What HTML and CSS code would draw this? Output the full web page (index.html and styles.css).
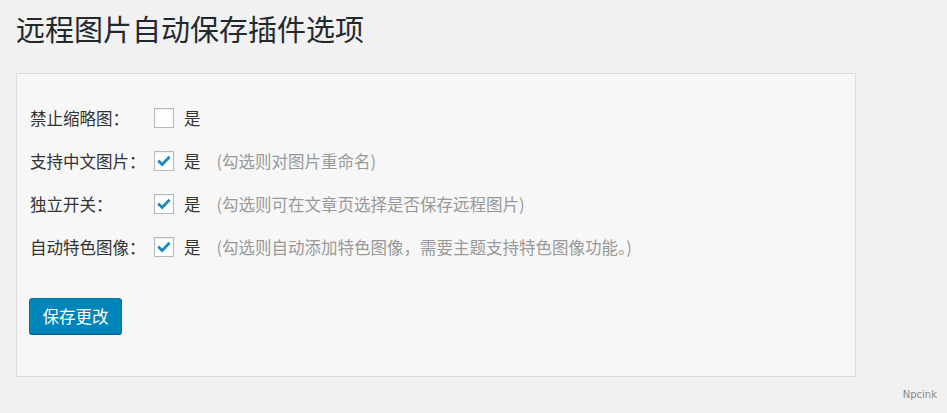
FILE: index.html
```html
<!DOCTYPE html>
<html lang="zh-CN">
<head>
<meta charset="utf-8">
<title>远程图片自动保存插件选项</title>
<link rel="stylesheet" href="styles.css">
</head>
<body>
<div class="wrap">
  <h1 class="page-title">远程图片自动保存插件选项</h1>
  <div class="panel">
    <div class="row">
      <span class="label">禁止缩略图：</span>
      <span class="checkbox"></span>
      <span class="yes">是</span>
    </div>
    <div class="row">
      <span class="label">支持中文图片：</span>
      <span class="checkbox"><svg viewBox="0 0 20 20" class="check"><path d="M3.6 9.6 L8 13.8 L16.2 5.2"/></svg></span>
      <span class="yes">是</span>
      <span class="hint">(勾选则对图片重命名)</span>
    </div>
    <div class="row">
      <span class="label">独立开关：</span>
      <span class="checkbox"><svg viewBox="0 0 20 20" class="check"><path d="M3.6 9.6 L8 13.8 L16.2 5.2"/></svg></span>
      <span class="yes">是</span>
      <span class="hint">(勾选则可在文章页选择是否保存远程图片)</span>
    </div>
    <div class="row">
      <span class="label">自动特色图像：</span>
      <span class="checkbox"><svg viewBox="0 0 20 20" class="check"><path d="M3.6 9.6 L8 13.8 L16.2 5.2"/></svg></span>
      <span class="yes">是</span>
      <span class="hint">(勾选则自动添加特色图像，需要主题支持特色图像功能。)</span>
    </div>
    <div class="actions">
      <button class="button-primary" type="button">保存更改</button>
    </div>
  </div>
  <div class="footer">Npcink</div>
</div>
</body>
</html>
```

FILE: styles.css
```css
html, body {
  margin: 0;
  padding: 0;
  background: #f1f1f1;
}

body {
  font-family: "Noto Sans CJK SC", "Noto Sans", "Liberation Sans", sans-serif;
  color: #32373c;
}

.wrap {
  padding: 10px 0 0 16px;
}

.page-title {
  margin: 0 0 26px 0;
  font-size: 29px;
  line-height: 37px;
  font-weight: 400;
  color: #23282d;
}

.panel {
  width: 825px;
  height: 302px;
  box-sizing: content-box;
  background: #f7f7f7;
  border: 1px solid #dcdcdc;
  padding: 0 0 0 13px;
  display: flex;
  flex-direction: column;
}

.row {
  display: flex;
  align-items: center;
  height: 43px;
  font-size: 16.5px;
}

.row:first-child {
  margin-top: 22px;
}

.label {
  width: 124px;
  color: #333;
}

.checkbox {
  width: 18px;
  height: 18px;
  border: 1px solid #b4b9be;
  background: #fff;
  box-shadow: inset 0 1px 2px rgba(0, 0, 0, 0.07);
  display: flex;
  align-items: center;
  justify-content: center;
}

.check {
  width: 18px;
  height: 18px;
  fill: none;
  stroke: #1e8cbe;
  stroke-width: 3.2;
  stroke-linecap: butt;
  stroke-linejoin: miter;
}

.yes {
  margin-left: 10px;
  color: #333;
}

.hint {
  margin-left: 16px;
  color: #999;
}

.actions {
  margin-top: 30px;
  margin-left: -1px;
}

.button-primary {
  width: 93px;
  height: 36px;
  background: #0085ba;
  border: 1px solid #0073aa;
  border-radius: 3px;
  box-shadow: 0 1px 0 #006799;
  color: #fff;
  font-family: "Noto Sans CJK SC", "Noto Sans", sans-serif;
  font-size: 16.5px;
  padding: 0;
  line-height: 34px;
}

.footer {
  text-align: right;
  padding-right: 10px;
  margin-top: 12px;
  font-family: "DejaVu Sans", "Liberation Sans", sans-serif;
  font-size: 10px;
  color: #888;
}
```
